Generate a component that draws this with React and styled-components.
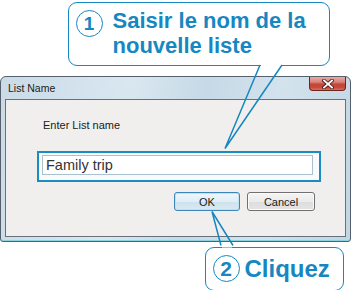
import React from "react";
import styled, { createGlobalStyle } from "styled-components";

const Global = createGlobalStyle`
  html, body { margin: 0; padding: 0; background: #ffffff; }
  body { font-family: "Liberation Sans", Arial, sans-serif; }
`;

const BLUE = "#1787c2";

const Page = styled.div`
  position: relative;
  width: 351px;
  height: 290px;
  overflow: hidden;
  background: #ffffff;
  padding-top: 2px;
  box-sizing: border-box;
`;

const Callout = styled.div`
  box-sizing: border-box;
  margin-left: ${(p) => p.$left}px;
  width: ${(p) => p.$width}px;
  height: ${(p) => p.$height}px;
  border: 1.5px solid ${BLUE};
  border-radius: 9px;
  background: #ffffff;
  display: flex;
  align-items: ${(p) => (p.$center ? "center" : "flex-start")};
  gap: ${(p) => p.$gap}px;
  padding: ${(p) => p.$pad};
  color: ${BLUE};
  font-family: "Liberation Sans", Arial, sans-serif;
  font-weight: 700;
`;

const Circle = styled.span`
  box-sizing: border-box;
  flex: none;
  width: 27px;
  height: 27px;
  border: 1.5px solid ${BLUE};
  border-radius: 50%;
  display: flex;
  align-items: center;
  justify-content: center;
  font-size: ${(p) => p.$size}px;
  font-weight: 700;
  line-height: 1;
  margin-top: ${(p) => p.$mt || 0}px;
`;

const CalloutText = styled.div`
  font-size: ${(p) => p.$size}px;
  line-height: ${(p) => p.$lh}px;
  white-space: nowrap;
`;

const Window = styled.div`
  box-sizing: border-box;
  margin-top: 10px;
  width: 351px;
  height: 166px;
  border: 1px solid #55606c;
  border-radius: 6px 6px 3px 3px;
  background: linear-gradient(100deg, #cadbe7 0%, #d9e7f0 35%, #c6d9e6 55%, #d3e3ee 75%, #c1d5e3 100%);
  display: flex;
  flex-direction: column;
  padding: 0 4px 4px 4px;
  box-shadow: inset 0 -1px 0 #8fd0e0;
`;

const TitleBar = styled.div`
  height: 22px;
  display: flex;
  align-items: flex-start;
  justify-content: space-between;
`;

const Title = styled.span`
  margin-top: 5px;
  margin-left: 3px;
  font-family: "Liberation Sans", Arial, sans-serif;
  font-size: 10.5px;
  line-height: 12px;
  color: #1a1a1a;
`;

const CloseButton = styled.div`
  box-sizing: border-box;
  width: 37px;
  height: 14px;
  border: 1px solid #6e231b;
  border-top: none;
  border-radius: 0 0 4px 4px;
  background: linear-gradient(to bottom, #e9aaa2 0%, #d88277 40%, #c2463a 55%, #c8493b 80%, #d9705f 100%);
  display: flex;
  align-items: center;
  justify-content: center;
`;

const Client = styled.div`
  box-sizing: border-box;
  flex: 1;
  border: 1px solid #67717c;
  background: #f0efed;
  display: flex;
  flex-direction: column;
  padding-top: 19px;
`;

const Label = styled.div`
  margin-left: 37px;
  font-family: "Liberation Sans", Arial, sans-serif;
  font-size: 11px;
  line-height: 13px;
  color: #1a1a1a;
`;

const Highlight = styled.div`
  box-sizing: border-box;
  margin-top: 19px;
  margin-left: 31px;
  width: 284px;
  height: 31px;
  border: 2px solid #1a8cc4;
  background: #fafafa;
  padding: 2px 0 0 3px;
`;

const Input = styled.div`
  box-sizing: border-box;
  width: 271px;
  height: 20px;
  border: 1px solid #a9c0cf;
  background: #ffffff;
  padding-left: 3px;
  font-family: "Liberation Sans", Arial, sans-serif;
  font-size: 14.5px;
  line-height: 18px;
  color: #333333;
`;

const ButtonRow = styled.div`
  margin-top: 10px;
  margin-right: 30px;
  display: flex;
  justify-content: flex-end;
  gap: 7px;
`;

const Button = styled.div`
  box-sizing: border-box;
  width: ${(p) => p.$w}px;
  height: 19px;
  border: 1px solid ${(p) => (p.$default ? "#3d86b8" : "#707070")};
  border-radius: 3px;
  background: ${(p) =>
    p.$default
      ? "linear-gradient(to bottom, #eef6fb 0%, #e1eef6 50%, #cde2ee 51%, #d8e9f2 100%)"
      : "linear-gradient(to bottom, #f4f4f4 0%, #ebebeb 50%, #dddddd 51%, #e4e4e4 100%)"};
  box-shadow: inset 0 0 0 1px ${(p) => (p.$default ? "#bfe2f3" : "#fbfbfb")};
  display: flex;
  align-items: center;
  justify-content: center;
  font-family: "Liberation Sans", Arial, sans-serif;
  font-size: 11px;
  color: #1a1a1a;
`;

const Overlay = styled.svg`
  position: absolute;
  left: 0;
  top: 0;
  pointer-events: none;
`;

export default function App() {
  return (
    <>
      <Global />
      <Page>
        <Callout $left={68} $width={262} $height={64} $gap={10} $pad="4.5px 0 0 6.5px">
          <Circle $size={19} $mt={2}>1</Circle>
          <CalloutText $size={22} $lh={25}>
            Saisir le nom de la
            <br />
            nouvelle liste
          </CalloutText>
        </Callout>

        <Window>
          <TitleBar>
            <Title>List Name</Title>
            <CloseButton>
              <svg width="12" height="10" viewBox="0 0 12 10">
                <path d="M2 1.5 L10 8.5 M10 1.5 L2 8.5" stroke="#4a1c18" strokeWidth="3.6" strokeLinecap="square" />
                <path d="M2 1.5 L10 8.5 M10 1.5 L2 8.5" stroke="#ffffff" strokeWidth="1.8" strokeLinecap="square" />
              </svg>
            </CloseButton>
          </TitleBar>
          <Client>
            <Label>Enter List name</Label>
            <Highlight>
              <Input>Family trip</Input>
            </Highlight>
            <ButtonRow>
              <Button $w={66} $default>OK</Button>
              <Button $w={68}>Cancel</Button>
            </ButtonRow>
          </Client>
        </Window>

        <Callout $left={205} $width={139} $height={44} $gap={5} $pad="0 0 1px 6.5px" $center style={{ marginTop: 5 }}>
          <Circle $size={21}>2</Circle>
          <CalloutText $size={24} $lh={27}>Cliquez</CalloutText>
        </Callout>

        <Overlay width="351" height="290" viewBox="0 0 351 290">
          <rect x="261" y="62.5" width="20" height="3.5" fill="#ffffff" />
          <polyline points="260,65 225,148.5 282,65" fill="none" stroke={BLUE} strokeWidth="1.5" strokeLinejoin="miter" />
          <rect x="222" y="244" width="10" height="3.5" fill="#ffffff" />
          <polyline points="221,245.5 212,211.5 233,245.5" fill="none" stroke={BLUE} strokeWidth="1.5" strokeLinejoin="miter" />
        </Overlay>
      </Page>
    </>
  );
}
